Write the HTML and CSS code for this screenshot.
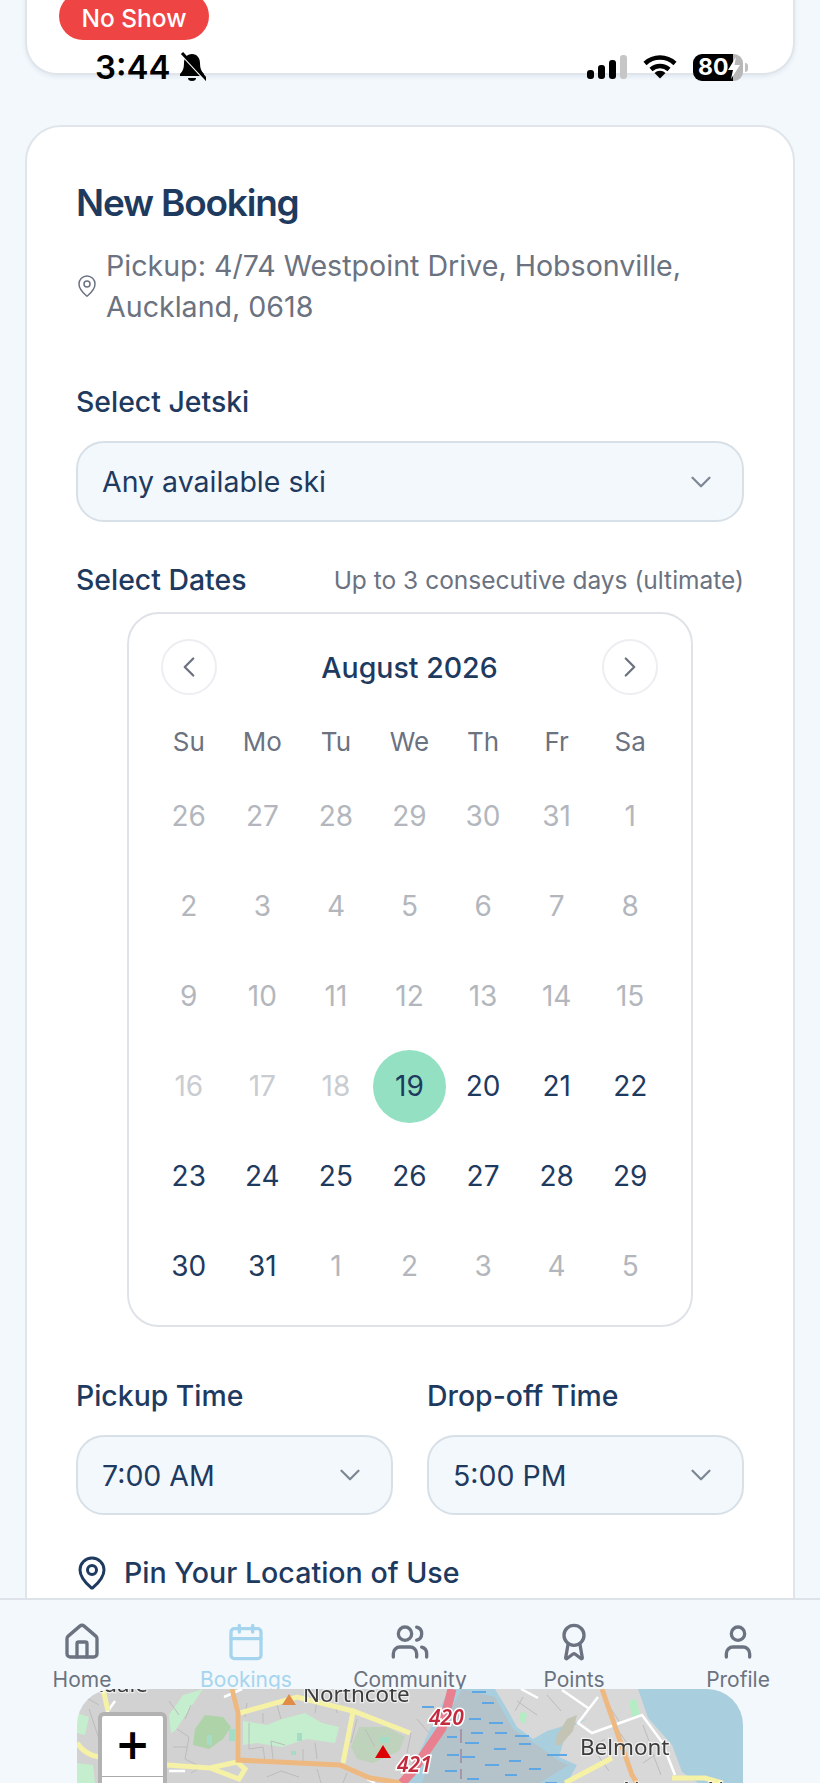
FILE: index.html
```html
<!DOCTYPE html>
<html lang="en">
<head>
    <meta charset="UTF-8">
    <meta name="viewport" content="width=device-width, initial-scale=1.0">
    <title>New Booking</title>
    <link rel="stylesheet" href="styles.css">
</head>
<body>
<svg class="icon-defs" width="0" height="0">
    <symbol id="chevron-down" viewBox="0 0 24 24"><path d="m6 9 6 6 6-6"/></symbol>
    <symbol id="map-pin" viewBox="0 0 24 24">
        <path d="M20 10c0 4.993-5.539 10.193-7.399 11.799a1 1 0 0 1-1.202 0C9.539 20.193 4 14.993 4 10a8 8 0 0 1 16 0"/>
        <circle cx="12" cy="10" r="3"/>
    </symbol>
</svg>
<div class="page">
    <!-- Status bar sits over the page -->
    <div class="status-bar">
        <div class="status-left">
            <span class="status-time">3:44</span>
            <svg class="bell" viewBox="0 0 28 30">
                <path d="M14 2c-5 0-8 4-8 9 0 5-1 8-4 11v2h24v-2c-3-3-4-6-4-11 0-5-3-9-8-9z"/>
                <path d="M10 26h8a4 3 0 0 1-8 0z"/>
                <path class="bell-gap" d="M2 1 27 28"/>
                <path class="bell-slash" d="M4 1 29 28"/>
            </svg>
        </div>
        <div class="status-right">
            <div class="signal">
                <span class="bar bar-1"></span>
                <span class="bar bar-2"></span>
                <span class="bar bar-3"></span>
                <span class="bar bar-4"></span>
            </div>
            <svg class="wifi" viewBox="0 0 34 24">
                <path d="M2 8.500a22 22 0 0 1 30 0"/>
                <path d="M8 14.500a13.500 13.500 0 0 1 18 0"/>
                <path class="wifi-dot" d="M17 23.500 11.500 18a8 8 0 0 1 11 0z"/>
            </svg>
            <div class="battery">
                <span class="battery-level">80</span>
                <svg class="bolt" viewBox="0 0 12 22"><path d="M8 0 0 13h5l-2 9 9-14H6.500z"/></svg>
            </div>
            <span class="battery-cap"></span>
        </div>
    </div>

    <div class="card card-top">
        <span class="badge">No Show</span>
    </div>

    <div class="card card-booking">
        <h1 class="title">New Booking</h1>
        <div class="pickup">
            <svg class="icon pin-small"><use href="#map-pin"/></svg>
            <span>Pickup: 4/74 Westpoint Drive, Hobsonville, Auckland, 0618</span>
        </div>

        <label class="label label-jetski">Select Jetski</label>
        <div class="select">
            <span>Any available ski</span>
            <svg class="icon chevron"><use href="#chevron-down"/></svg>
        </div>

        <div class="dates-head">
            <label class="label">Select Dates</label>
            <span class="hint">Up to 3 consecutive days (ultimate)</span>
        </div>

        <div class="calendar">
            <div class="cal-head">
                <span class="cal-btn"><svg class="icon" viewBox="0 0 24 24"><path d="m15 18-6-6 6-6"/></svg></span>
                <span class="cal-title">August 2026</span>
                <span class="cal-btn"><svg class="icon" viewBox="0 0 24 24"><path d="m9 18 6-6-6-6"/></svg></span>
            </div>
            <div class="cal-grid">
                <span class="weekday">Su</span><span class="weekday">Mo</span><span class="weekday">Tu</span><span class="weekday">We</span><span class="weekday">Th</span><span class="weekday">Fr</span><span class="weekday">Sa</span>

                <span class="day other">26</span><span class="day other">27</span><span class="day other">28</span><span class="day other">29</span><span class="day other">30</span><span class="day other">31</span><span class="day other">1</span>
                <span class="day other">2</span><span class="day other">3</span><span class="day other">4</span><span class="day other">5</span><span class="day other">6</span><span class="day other">7</span><span class="day other">8</span>
                <span class="day other">9</span><span class="day past">10</span><span class="day past">11</span><span class="day past">12</span><span class="day past">13</span><span class="day past">14</span><span class="day past">15</span>
                <span class="day off">16</span><span class="day off">17</span><span class="day off">18</span><span class="day selected"><b>19</b></span><span class="day">20</span><span class="day">21</span><span class="day">22</span>
                <span class="day">23</span><span class="day">24</span><span class="day">25</span><span class="day">26</span><span class="day">27</span><span class="day">28</span><span class="day">29</span>
                <span class="day">30</span><span class="day">31</span><span class="day other">1</span><span class="day other">2</span><span class="day other">3</span><span class="day other">4</span><span class="day other">5</span>
            </div>
        </div>

        <div class="times">
            <div class="time-col">
                <label class="label">Pickup Time</label>
                <div class="select">
                    <span>7:00 AM</span>
                    <svg class="icon chevron"><use href="#chevron-down"/></svg>
                </div>
            </div>
            <div class="time-col">
                <label class="label">Drop-off Time</label>
                <div class="select">
                    <span>5:00 PM</span>
                    <svg class="icon chevron"><use href="#chevron-down"/></svg>
                </div>
            </div>
        </div>

        <div class="pin-label">
            <svg class="icon pin-large"><use href="#map-pin"/></svg>
            <span>Pin Your Location of Use</span>
        </div>
    </div>

    <nav class="bottom-nav">
        <div class="nav-item">
            <svg class="icon" viewBox="0 0 24 24">
                <path d="M15 21v-8a1 1 0 0 0-1-1h-4a1 1 0 0 0-1 1v8"/>
                <path d="M3 10a2 2 0 0 1 .709-1.528l7-5.999a2 2 0 0 1 2.582 0l7 5.999A2 2 0 0 1 21 10v9a2 2 0 0 1-2 2H5a2 2 0 0 1-2-2z"/>
            </svg>
            <span>Home</span>
        </div>
        <div class="nav-item active">
            <svg class="icon" viewBox="0 0 24 24">
                <path d="M8 2v4"/><path d="M16 2v4"/>
                <rect x="3" y="4" width="18" height="18" rx="2"/>
                <path d="M3 10h18"/>
            </svg>
            <span>Bookings</span>
        </div>
        <div class="nav-item">
            <svg class="icon" viewBox="0 0 24 24">
                <path d="M16 21v-2a4 4 0 0 0-4-4H6a4 4 0 0 0-4 4v2"/>
                <circle cx="9" cy="7" r="4"/>
                <path d="M22 21v-2a4 4 0 0 0-3-3.870"/>
                <path d="M16 3.130a4 4 0 0 1 0 7.750"/>
            </svg>
            <span>Community</span>
        </div>
        <div class="nav-item">
            <svg class="icon" viewBox="0 0 24 24">
                <path d="m15.477 12.890 1.515 8.526a.5.5 0 0 1-.810.470l-3.580-2.687a1 1 0 0 0-1.197 0l-3.586 2.686a.5.5 0 0 1-.810-.469l1.514-8.526"/>
                <circle cx="12" cy="8" r="6"/>
            </svg>
            <span>Points</span>
        </div>
        <div class="nav-item">
            <svg class="icon" viewBox="0 0 24 24">
                <path d="M19 21v-2a4 4 0 0 0-4-4H9a4 4 0 0 0-4 4v2"/>
                <circle cx="12" cy="7" r="4"/>
            </svg>
            <span>Profile</span>
        </div>
    </nav>

    <!-- Map paints over the nav, same as the screenshot -->
    <div class="map">
        <svg class="map-art" viewBox="0 0 666 94" preserveAspectRatio="none">
            <rect width="666" height="94" fill="#d3d2d2"/>
            <!-- water and mud flats -->
            <path fill="#a9cfdf" d="M328 94 372 0H561Q566 15 571 29 585 42 595 56L605 83 621 94Z"/>
            <path fill="#a9cfdf" d="M561 0H666V94H621L605 83 595 56 571 29Z"/>
            <path fill="#b4c3ca" d="M345 94 362 40 385 0 418 8 436 40 460 56 482 72 492 76 462 94Z"/>
            <path fill="#d9d8d8" d="M418 0H561L571 29 595 56 605 83 621 94H490L500 76 482 68 490 40 510 30 470 42 456 50 440 38 430 20Z"/>
            <path fill="#c3c4b4" d="M480 46 490 30 500 26 496 42 484 56 478 56Z"/>
            <path fill="#d3d2d2" d="M328 0H368L340 60 328 72Z"/>
            <!-- parks -->
            <path fill="#c4eecd" d="M166 32 190 36 205 30 228 24 245 34 262 38 258 54 230 50 205 58 180 54 166 56Z"/>
            <path fill="#afd3a9" d="M118 40 128 26 146 28 154 38 146 50 132 60 116 56Z"/>
            <path fill="#afd3a9" d="M282 38 310 38 328 48 322 62 296 74 280 70 274 58Z" opacity=".55"/>
            <path fill="#c4eecd" d="M0 74 16 76 18 94H0ZM0 24 12 28 8 46 0 44ZM92 26 106 6 126 0 98 42 94 44Z"/>
            <path fill="#a4dcc4" d="M152 40h6v12h-6zM220 44h5v8h-5zM130 46h5v10h-5zM303 48h10v6h-10zM214 62h5v4h-5z"/>
            <path fill="#b4ecc4" d="M444 22l6 3-2 10-6-4zM552 12l7-2 4 16-8 2z"/>
            <!-- small streets -->
            <path class="street" d="M100 40l12 8-4 22 16 8M96 58h14M172 34v26l14-2 2 14M196 70l-2-18 14 4M226 60v14h14M238 54l2 16M280 30l-6 24M288 40l10 18M190 88l14-6 18 6M440 12l20 14M530 14l12 18M518 62l14 20M574 60l10 26M12 20l10 30M470 6l14 16M92 12l10 14M170 14l-2 14M186 24v10M200 16l4 14M240 12l-2 12M258 14l2 10M8 8l14 8M108 30l6-14M340 30l12 14M334 44l-4 20M446 8l-8 14M540 40l10 14M528 50l-10 6M566 36l6 16M578 66l-12 8M114 84l10-6M240 80l4 14M270 84l-4 10"/>
            <path class="street-white" d="M461 9 444 0M485 1 511 19M521 8 501 34 515 44 565 26 585 53 598 86M147 8 165 0M38 12 28 26M92 82h16M290 90l8 4"/>
            <!-- roads -->
            <path class="road-yellow" d="M26 0 31 22M0 54Q8 66 22 68M90 76 133 79 160 73M133 79 162 90 168 80 160 73M163 24 220 8 276 22 333 44M276 23 266 74M488 94 535 69M595 89H628L645 94"/>
            <path class="road-orange" d="M155 0 161 24V71L263 76 293 89 325 94M525 0 555 86 560 94"/>
            <path class="road-pink" d="M375 0 365 39 335 83 325 94"/>
            <!-- mud flat dashes -->
            <path class="dash" d="M345 18h12M395 3h14M405 14h12M392 30h12M412 34h14M394 44h12M418 44h12M438 47h14M370 48h10M388 54h14M417 60h12M442 55h12M470 66h12M370 66h12M384 68h14M408 76h14M432 72h12M452 80h12M368 82h12M390 90h12M428 86h12M468 94h12M482 66h8"/>
            <path class="border-dash" d="M384 20V90"/>
            <!-- markers -->
            <path fill="#e08c46" d="M212 5 219 16H205Z"/>
            <path fill="#dd0000" d="M306 56 314 69H298Z"/>
            <!-- place labels -->
            <text class="place" x="71" y="3" text-anchor="end">Birkdale</text>
            <text class="place" x="226" y="13">Northcote</text>
            <text class="place" x="503" y="66">Belmont</text>
            <text class="place" x="546" y="109">Narrow Neck</text>
            <text class="shield" x="352" y="36">420</text>
            <text class="shield" x="320" y="83">421</text>
        </svg>
        <div class="zoom-control">
            <span class="zoom-btn">+</span>
            <span class="zoom-btn">&minus;</span>
        </div>
    </div>
</div>
</body>
</html>
```

FILE: styles.css
```css
* {
    margin: 0;
    padding: 0;
    box-sizing: border-box;
}

body {
    font-family: Inter, "Liberation Sans", sans-serif;
    color: #1e3a5f;
    background: #f3f8fd;
}

.page {
    position: relative;
    width: 820px;
    height: 1783px;
    overflow: hidden;
    padding: 0 25px;
}

.icon-defs {
    position: absolute;
}

.icon {
    fill: none;
    stroke: currentColor;
    stroke-width: 2;
    stroke-linecap: round;
    stroke-linejoin: round;
}

/* Status bar */
.status-bar {
    position: absolute;
    top: 50px;
    left: 0;
    width: 100%;
    height: 34px;
    display: flex;
    justify-content: space-between;
    align-items: center;
    padding: 0 72px 0 95px;
    color: #000;
    z-index: 3;
}

.status-left {
    display: flex;
    align-items: center;
    gap: 8px;
}

.status-time {
    font-size: 33px;
    font-weight: 600;
    line-height: 34px;
}

.bell {
    width: 28px;
    height: 30px;
    fill: #000;
}

.bell-gap {
    fill: none;
    stroke: #fff;
    stroke-width: 2;
}

.bell-slash {
    fill: none;
    stroke: #000;
    stroke-width: 3;
}

.status-right {
    display: flex;
    align-items: flex-end;
    height: 28px;
}

.signal {
    display: flex;
    align-items: flex-end;
    gap: 4px;
    margin-right: 16px;
    margin-bottom: 2px;
}

.bar {
    width: 7px;
    background: #000;
    border-radius: 3px;
}

.bar-1 { height: 9px; }
.bar-2 { height: 14px; }
.bar-3 { height: 19px; }
.bar-4 { height: 24px; background: #c6c6c6; }

.wifi {
    width: 34px;
    height: 24px;
    margin-right: 16px;
    margin-bottom: 2px;
    fill: none;
    stroke: #000;
    stroke-width: 4.5;
}

.wifi-dot {
    fill: #000;
    stroke: none;
}

.battery {
    display: flex;
    align-items: center;
    width: 50px;
    height: 27px;
    padding-left: 5px;
    border-radius: 9px;
    background: linear-gradient(to right, #000 80%, #b8b8b8 80%);
    color: #fff;
    font-size: 23px;
    font-weight: 700;
}

.battery-level {
    line-height: 27px;
}

.bolt {
    width: 12px;
    height: 22px;
    fill: #fff;
}

.battery-cap {
    width: 3px;
    height: 9px;
    margin: 0 0 9px 2px;
    border-radius: 0 3px 3px 0;
    background: #c0c0c0;
}

/* Cards */
.card {
    background: #fff;
    border: 2px solid #dfe5ea;
}

.card-top {
    height: 83px;
    margin-top: -8px;
    padding-left: 32px;
    border-top: 0;
    border-radius: 0 0 32px 32px;
    box-shadow: 0 2px 4px rgba(30, 58, 95, 0.08);
}

.badge {
    display: block;
    width: 150px;
    height: 48px;
    padding-top: 1px;
    border-radius: 24px;
    background: #ef4444;
    color: #fff;
    font-size: 24.5px;
    font-weight: 500;
    line-height: 50px;
    text-align: center;
}

.card-booking {
    height: 1700px;
    margin-top: 50px;
    padding: 54px 49px 0;
    border-radius: 36px 36px 0 0;
}

.title {
    font-size: 37px;
    font-weight: 600;
    line-height: 44px;
    letter-spacing: -1.2px;
}

.pickup {
    display: flex;
    align-items: center;
    gap: 7px;
    margin-top: 20px;
    color: #6b7280;
    font-size: 28.6px;
    line-height: 41px;
}

.pin-small {
    flex: none;
    width: 24px;
    height: 24px;
    margin-left: -1px;
    stroke-width: 1.5;
}

.label {
    display: block;
    font-size: 28.4px;
    font-weight: 500;
    line-height: 36px;
}

.label-jetski {
    margin-top: 57px;
}

.select {
    display: flex;
    justify-content: space-between;
    align-items: center;
    height: 81px;
    margin-top: 21px;
    padding: 0 25px 0 24px;
    background: #f3f8fd;
    border: 2px solid #d8e0e7;
    border-radius: 28px;
    font-size: 28.5px;
}

.chevron {
    width: 34px;
    height: 34px;
    margin-right: -1px;
    color: #7d8794;
    stroke-width: 1.6;
}

.dates-head {
    display: flex;
    justify-content: space-between;
    align-items: center;
    margin-top: 40px;
}

.hint {
    color: #6b7280;
    font-size: 24.5px;
}

/* Calendar */
.calendar {
    width: 566px;
    height: 715px;
    margin: 14px auto 0;
    padding: 25px 24px 0 23px;
    border: 2px solid #dfe3e8;
    border-radius: 32px;
}

.cal-head {
    display: flex;
    justify-content: space-between;
    align-items: center;
    padding: 0 9px;
}

.cal-title {
    font-size: 28.5px;
    font-weight: 500;
}

.cal-btn {
    display: flex;
    justify-content: center;
    align-items: center;
    width: 56px;
    height: 56px;
    border: 2px solid #eceef1;
    border-radius: 50%;
    color: #6b7280;
}

.cal-btn .icon {
    width: 34px;
    height: 34px;
    stroke-width: 1.6;
}

.cal-grid {
    display: grid;
    grid-template-columns: repeat(7, 1fr);
    grid-template-rows: 59px repeat(6, 90px);
    margin-top: 17px;
    text-align: center;
}

.weekday {
    display: flex;
    justify-content: center;
    align-items: center;
    color: #6b7280;
    font-size: 26px;
}

.day {
    display: flex;
    justify-content: center;
    align-items: center;
    font-size: 28px;
}

.other,
.past {
    color: #b3b7bd;
}

.off {
    color: #c9ccd1;
}

.selected b {
    display: flex;
    justify-content: center;
    align-items: center;
    width: 73px;
    height: 73px;
    border-radius: 50%;
    background: #93e0c3;
    font-weight: 400;
}

/* Times */
.times {
    display: grid;
    grid-template-columns: 317px 317px;
    gap: 34px;
    margin-top: 51px;
}

.time-col .select {
    height: 80px;
}

.pin-label {
    display: flex;
    align-items: center;
    gap: 14px;
    margin-top: 40px;
    font-size: 28.6px;
    font-weight: 500;
    line-height: 36px;
}

.pin-large {
    flex: none;
    width: 36px;
    height: 36px;
    margin-left: -2px;
}

/* Bottom nav */
.bottom-nav {
    position: absolute;
    left: 0;
    bottom: 0;
    width: 100%;
    height: 185px;
    display: grid;
    grid-template-columns: repeat(5, 164px);
    padding-top: 22px;
    background: #f3f8fc;
    border-top: 2px solid #dde3e9;
    z-index: 1;
}

.nav-item {
    display: flex;
    flex-direction: column;
    align-items: center;
    gap: 4px;
    color: #6b7280;
    font-size: 21px;
    line-height: 28px;
}

.nav-item .icon {
    width: 40px;
    height: 40px;
}

.nav-item.active {
    color: #a5d5ee;
}

/* Map */
.map {
    position: absolute;
    top: 1689px;
    left: 77px;
    width: 666px;
    height: 94px;
    overflow: hidden;
    border-radius: 36px 36px 0 0;
    z-index: 2;
}

.map-art {
    display: block;
    width: 666px;
    height: 94px;
    filter: blur(0.5px);
}

.street {
    fill: none;
    stroke: #bcbcbc;
    stroke-width: 1;
}

.street-white {
    fill: none;
    stroke: #fff;
    stroke-width: 2.5;
}

.road-yellow {
    fill: none;
    stroke: #f5f2a6;
    stroke-width: 5;
}

.road-orange {
    fill: none;
    stroke: #eeb981;
    stroke-width: 5;
}

.road-pink {
    fill: none;
    stroke: #e8808f;
    stroke-width: 9;
}

.dash {
    fill: none;
    stroke: #5ea7e4;
    stroke-width: 2;
}

.border-dash {
    fill: none;
    stroke: #a794ad;
    stroke-width: 2;
    stroke-dasharray: 14 6;
}

.place {
    fill: #3c3c3c;
    stroke: #fff;
    stroke-width: 2.5;
    stroke-opacity: 0.6;
    paint-order: stroke;
    font-family: "Noto Sans", sans-serif;
    font-size: 22.4px;
}

.shield {
    fill: #c22a3d;
    stroke: #fff;
    stroke-width: 3;
    paint-order: stroke;
    font-family: "Noto Sans", sans-serif;
    font-size: 21px;
    font-style: italic;
    font-weight: 600;
}

.zoom-control {
    position: absolute;
    top: 23px;
    left: 21px;
    width: 69px;
    border: 4px solid rgba(0, 0, 0, 0.3);
    border-radius: 6px;
    background: #fff;
}

.zoom-btn {
    display: block;
    height: 61px;
    border-bottom: 1px solid #aaa;
    color: #000;
    font-family: "DejaVu Sans", sans-serif;
    font-size: 42px;
    font-weight: 700;
    line-height: 58px;
    text-align: center;
}
```
